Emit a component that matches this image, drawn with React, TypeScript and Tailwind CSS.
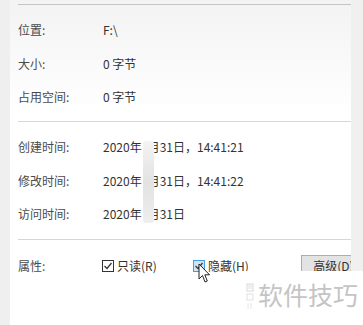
import React from "react";

const font = { fontFamily: '"Noto Sans CJK SC", "Noto Sans", sans-serif' };

function Row({ label, value, h }: { label: string; value: React.ReactNode; h: string }) {
  return (
    <div className={`flex items-center ${h}`}>
      <div className="w-[85px] shrink-0 text-[12px] text-[#4a4a4a]">{label}</div>
      <div className="text-[12px] text-[#333] whitespace-nowrap">{value}</div>
    </div>
  );
}

function DateVal({ time }: { time?: string }) {
  return (
    <span className="flex items-center">
      <span>2020年</span>
      <span className="inline-block w-[6px]" />
      <span>月31日{time ? `，${time}` : ""}</span>
    </span>
  );
}

function Check({ hover }: { hover?: boolean }) {
  return (
    <div
      className={
        hover
          ? "w-[12px] h-[12px] shrink-0 border border-[#4b9be0] bg-[#cfe4f6] flex items-center justify-center"
          : "w-[12px] h-[12px] shrink-0 border border-[#333] bg-white flex items-center justify-center"
      }
    >
      <svg width="10" height="10" viewBox="0 0 10 10">
        <path d="M1.5 5 L4 7.5 L8.5 2" fill="none" stroke="#333" strokeWidth="1.2" />
      </svg>
    </div>
  );
}

export default function App() {
  return (
    <div className="relative w-[363px] h-[325px] overflow-hidden bg-white" style={font}>
      <div className="flex h-full">
        <div className="w-[10px] shrink-0 h-full bg-[#efefef]" />
        <div className="flex-1 min-w-0 h-full overflow-hidden bg-gradient-to-b from-[#f3f3f3] via-white via-[35%] to-white pl-[8px]">
          <div className="pt-[4px]">
            <div className="h-[1px] bg-[#c4c4c4]" />
          </div>
          <div className="mt-[8px]">
            <Row label="位置:" value="F:\" h="h-[34px]" />
            <Row label="大小:" value="0 字节" h="h-[33px]" />
            <Row label="占用空间:" value="0 字节" h="h-[34px]" />
          </div>
          <div className="mt-[7px] h-[1px] bg-[#d6d6d6]" />
          <div className="mt-[8px]">
            <Row label="创建时间:" value={<DateVal time="14:41:21" />} h="h-[34px]" />
            <Row label="修改时间:" value={<DateVal time="14:41:22" />} h="h-[34px]" />
            <Row label="访问时间:" value={<DateVal />} h="h-[32px]" />
          </div>
          <div className="mt-[9px] h-[1px] bg-[#d6d6d6]" />
          <div className="mt-[9px] flex items-center h-[34px]">
            <div className="w-[84px] shrink-0 text-[12px] text-[#4a4a4a]">属性:</div>
            <div className="flex items-center w-[91px] shrink-0">
              <Check />
              <span className="ml-[3px] text-[12px] text-[#333] whitespace-nowrap">只读(R)</span>
            </div>
            <div className="flex items-center w-[108px] shrink-0">
              <Check hover />
              <span className="ml-[3px] text-[12px] text-[#333] whitespace-nowrap">隐藏(H)</span>
            </div>
            <div className="shrink-0 w-[75px] h-[23px] border border-[#adadad] bg-[#e3e3e3] flex items-center justify-center text-[12px] text-[#333] whitespace-nowrap">
              高级(D)...
            </div>
          </div>
        </div>
        <div className="w-[12px] shrink-0 h-full bg-[#f0f0f0]" />
      </div>

      {/* obscuring patch */}
      <div className="absolute left-[143px] top-[141px] w-[11px] h-[82px] rounded-[3px] bg-gradient-to-b from-[#f4f4f4] via-[#e2e2e2] to-[#eeeeee]" />

      {/* cursor */}
      <svg className="absolute left-[198px] top-[263px]" width="13" height="21" viewBox="0 0 13 21">
        <path d="M1 1 L1 16 L4.5 12.5 L7 19 L9.3 18 L6.8 11.8 L11.5 11.8 Z" fill="white" stroke="#222" strokeWidth="1" strokeLinejoin="round" />
      </svg>

      {/* watermark */}
      <div className="absolute left-[243px] top-[271px] w-[120px] h-[54px] bg-white flex items-start pt-[8px]">
        <svg className="mt-[4px] ml-[3px]" width="8" height="28" viewBox="0 0 8 28">
          <rect x="1" y="1" width="6" height="7" fill="none" stroke="#d8d8d8" strokeWidth="1" />
          <path d="M2 3 H6 M2 5 H6" stroke="#d8d8d8" strokeWidth="0.8" />
          <rect x="1" y="11" width="6" height="6" fill="none" stroke="#e0e0e0" strokeWidth="1" />
          <path d="M2 20 V26 M5 20 V26" stroke="#e6e6e6" strokeWidth="1" />
        </svg>
        <span className="ml-[4px] text-[25px] leading-[30px] text-[#c4c4c4]">软件技巧</span>
      </div>
    </div>
  );
}
